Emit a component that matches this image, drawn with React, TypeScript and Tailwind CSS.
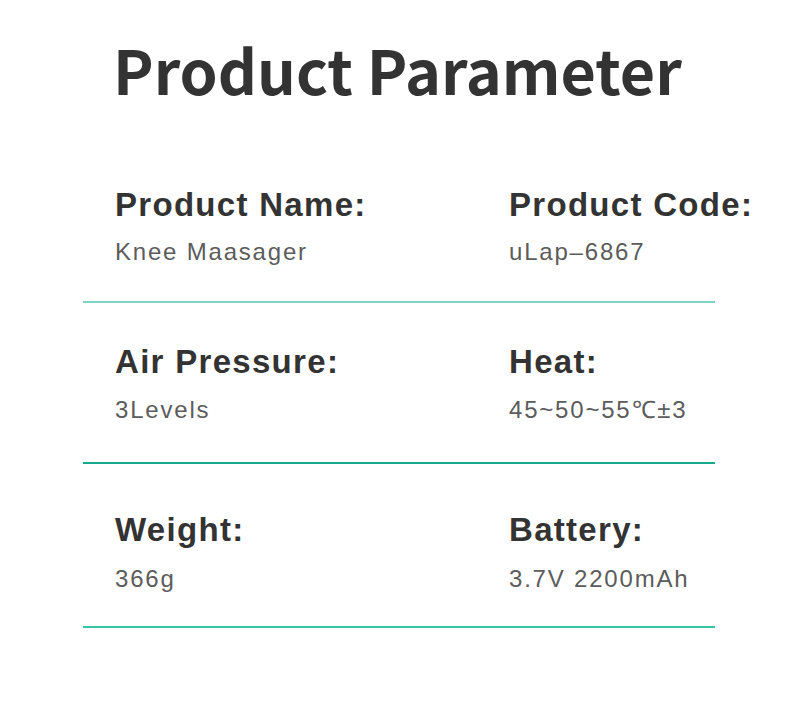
import React from "react";

type Param = { label: string; value: string };

// each row: two params side by side, divider colour differs per row
const rows: {
  items: [Param, Param];
  pad: string;
  gap: string;
  line: string;
}[] = [
  {
    items: [
      { label: "Product Name:", value: "Knee Maasager" },
      { label: "Product Code:", value: "uLap–6867" },
    ],
    pad: "pt-[86px] pb-[35px]",
    gap: "gap-[13px]",
    line: "border-[#80d4c5]",
  },
  {
    items: [
      { label: "Air Pressure:", value: "3Levels" },
      { label: "Heat:", value: "45~50~55℃±3" },
    ],
    pad: "pt-[39px] pb-[38px]",
    gap: "gap-[14px]",
    line: "border-[#17aa8d]",
  },
  {
    items: [
      { label: "Weight:", value: "366g" },
      { label: "Battery:", value: "3.7V 2200mAh" },
    ],
    pad: "pt-[46px] pb-[33px]",
    gap: "gap-[15px]",
    line: "border-[#38c4a8]",
  },
];

function ParamCell({ label, value, gap }: Param & { gap: string }) {
  return (
    <div className={`flex flex-col whitespace-pre ${gap}`}>
      <div className="text-[33px] leading-[40px] font-bold tracking-[1.3px] text-[#333333]">
        {label}
      </div>
      <div className="text-[24px] leading-[28px] tracking-[1.8px] text-[#5c5c5c]">
        {value}
      </div>
    </div>
  );
}

export default function App() {
  return (
    <div
      className="w-[790px] h-[717px] bg-white overflow-hidden pt-[38px]"
      style={{ fontFamily: '"Liberation Sans", Arial, sans-serif' }}
    >
      <h1
        className="pl-[113px] text-[61px] leading-[61px] font-bold text-[#333333]"
        style={{ fontFamily: '"Noto Sans CJK SC", "Noto Sans", sans-serif' }}
      >
        Product Parameter
      </h1>

      {rows.map((row, i) => (
        <div
          key={i}
          className={`ml-[83px] w-[632px] border-b-2 ${row.line} ${row.pad}`}
        >
          <div className="grid grid-cols-[394px_1fr] pl-[32px]">
            <ParamCell {...row.items[0]} gap={row.gap} />
            <ParamCell {...row.items[1]} gap={row.gap} />
          </div>
        </div>
      ))}
    </div>
  );
}
